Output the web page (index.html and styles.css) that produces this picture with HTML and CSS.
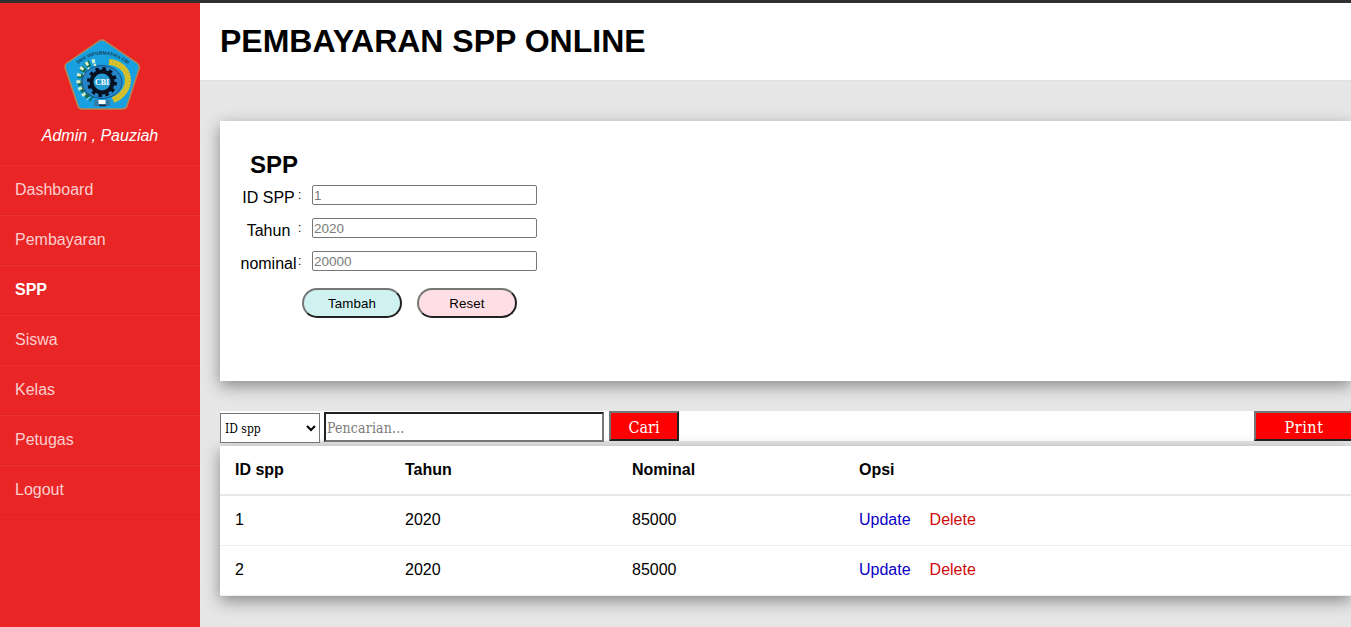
FILE: index.html
```html
<!DOCTYPE html>
<html lang="id">
<head>
<meta charset="utf-8">
<title>Pembayaran SPP Online</title>
<link rel="stylesheet" href="styles.css">
</head>
<body>
<div class="layout">
  <aside class="sidebar">
    <div class="profile">
      <svg class="logo" viewBox="0 0 76 72">
        <defs><path id="arc" d="M11 28Q38 3 67 28"/></defs>
        <path d="M35 2Q38 0 41 2L73 24Q76 26 75 30L63 67Q62 70 58 70H18Q15 70 14 67L1.500 30Q0 26 3 24Z" fill="#18a0e0" stroke="#b98550" stroke-width="1.500"/>
        <text class="logo-ring"><textPath href="#arc" startOffset="50%">SMK INFORMATIKA CBI</textPath></text>
        <g fill="none">
          <path d="M26 24C14 30 12 49 28 60" stroke="#176b54" stroke-width="6" stroke-dasharray="5 2"/>
          <path d="M31 22C13 24 8 47 24 60" stroke="#d5edc8" stroke-width="4" stroke-dasharray="3 4"/>
          <path d="M32 26C19 30 16 43 23 54" stroke="#e5f3ce" stroke-width="3" stroke-dasharray="2 5"/>
          <path d="M45 23C69 25 70 53 49 61" stroke="#dcc52d" stroke-width="6"/>
          <path d="M45 23C69 25 70 53 49 61" stroke="#b9ad2c" stroke-width="5" stroke-dasharray=".7 2"/>
        </g>
        <ellipse cx="38" cy="43" rx="20" ry="16.500" fill="#2485c8" stroke="#174f83"/>
        <circle cx="38" cy="43" r="13" fill="none" stroke="#07101e" stroke-width="4" stroke-dasharray="3.400 3.400"/>
        <circle cx="38" cy="43" r="10.500" fill="#2398d2" stroke="#07101e" stroke-width="4"/>
        <text class="logo-name" x="38" y="46" text-anchor="middle">CBI</text>
        <path d="M30 61h16v6H30z" fill="#3679a7"/><path d="M34.500 61h7v4h-7z" fill="#fff"/><path d="M35 66.500h7" stroke="#172630" stroke-width="1.500"/>
      </svg>
      <em class="user">Admin , Pauziah</em>
    </div>
    <nav class="menu">
      <a>Dashboard</a><a>Pembayaran</a><a class="active">SPP</a><a>Siswa</a><a>Kelas</a><a>Petugas</a><a>Logout</a>
    </nav>
  </aside>
  <main class="main">
    <header class="header"><h1>PEMBAYARAN SPP ONLINE</h1></header>
    <div class="content">
      <section class="card">
        <h2>SPP</h2>
        <form class="form">
          <label class="field"><span class="label">ID SPP</span><span class="colon">:</span><input placeholder="1"></label>
          <label class="field"><span class="label">Tahun</span><span class="colon">:</span><input placeholder="2020"></label>
          <label class="field"><span class="label">nominal</span><span class="colon">:</span><input placeholder="20000"></label>
          <div class="actions"><button type="button" class="pill add">Tambah</button><button type="button" class="pill reset">Reset</button></div>
        </form>
      </section>
      <div class="toolbar">
        <select class="filter"><option>ID spp</option></select>
        <input class="search" placeholder="Pencarian...">
        <button class="red-button find">Cari</button>
        <button class="red-button print">Print</button>
      </div>
      <div class="table">
        <div class="row head"><span>ID spp</span><span>Tahun</span><span>Nominal</span><span>Opsi</span></div>
        <div class="row"><span>1</span><span>2020</span><span>85000</span><span class="options"><a class="update">Update</a><a class="delete">Delete</a></span></div>
        <div class="row"><span>2</span><span>2020</span><span>85000</span><span class="options"><a class="update">Update</a><a class="delete">Delete</a></span></div>
      </div>
    </div>
  </main>
</div>
</body>
</html>
```
FILE: styles.css
```css
* { box-sizing: border-box; }
body { margin: 0; overflow: hidden; font: 16px "Liberation Sans", Arial, sans-serif; color: #000; }
.layout { display: flex; height: 627px; border-top: 3px solid #303030; }
.sidebar { flex: 0 0 200px; background: #ea2525; }
.profile { height: 162px; padding-top: 36px; display: flex; flex-direction: column; align-items: center; border-bottom: 1px solid #e52222; }
.logo { width: 76px; height: 72px; margin-left: 3px; }
.logo-ring { font: bold 4.8px "Liberation Sans", sans-serif; fill: #173d5b; text-anchor: middle; }
.logo-name { font: bold 8px "Liberation Serif", serif; fill: #fff; }
.user { margin-top: 16px; line-height: 18px; color: #fff; }
.menu a { display: block; height: 50px; padding-left: 15px; line-height: 48px; color: #fbcfcf; border-top: 1px solid #ed3431; border-bottom: 1px solid #e22323; }
.menu .active { color: #fff; font-weight: bold; }
.main { flex: 1; min-width: 0; background: #e6e6e6; }
.header { height: 78px; padding-left: 20px; background: #fff; border-bottom: 1px solid #e1e1e1; }
h1 { margin: 0; font-size: 32px; line-height: 76px; }
.content { padding: 40px 0 0 20px; }
.card { height: 260px; padding-top: 30px; background: #fff; box-shadow: 0 5px 15px rgba(0,0,0,.4); }
h2 { margin: 0 0 0 30px; font-size: 24px; line-height: 28px; }
.form { display: flex; flex-direction: column; padding: 6px 0 0 20px; }
.field { display: flex; height: 33px; }
.label { flex: none; width: 57px; padding-top: 4px; line-height: 18px; text-align: center; white-space: nowrap; }
.colon { width: 15px; padding-left: 1px; font-size: 12px; line-height: 21px; }
.field input { width: 225px; height: 20px; padding: 0 1px; border: 1px solid #767676; border-radius: 2px; font: 13.5px "Liberation Sans", sans-serif; }
input::placeholder { color: #7b7b7b; }
.actions { display: flex; gap: 15px; padding: 4px 0 0 62px; }
.pill { width: 100px; height: 30px; padding: 0; border: 2px solid; border-color: #767676 #212121 #212121 #767676; border-radius: 15px; font: 13.333px "Liberation Sans", sans-serif; letter-spacing: .1px; color: #000; }
.add { background: #cff2f0; }
.reset { background: #ffdee5; }
.toolbar { display: flex; height: 30px; margin-top: 30px; background: #fff; }
.filter { width: 100px; height: 30px; margin: 2px 4px 0 0; padding: 1px 0 0; border: 1px solid #767676; border-radius: 0; background: #fff; color: #000; font: 12px "DejaVu Serif Condensed", "DejaVu Serif", serif; }
.search { width: 280px; height: 30px; margin: 1px 5px 0 0; padding: 2px 1px 0; border: 2px solid; border-color: #212121 #767676 #767676 #212121; background: #fff; font: 14px "DejaVu Serif Condensed", "DejaVu Serif", serif; letter-spacing: .15px; }
.red-button { height: 30px; padding: 2px 0 0; border: 2px solid; border-color: #767676 #212121 #212121 #767676; background: #f00; color: #fff; font: 16px "DejaVu Serif Condensed", "DejaVu Serif", serif; }
.find { width: 70px; }
.print { width: 100px; margin: 0 -3px 0 auto; letter-spacing: .6px; }
.table { margin-top: 5px; background: #fff; box-shadow: 0 5px 15px rgba(0,0,0,.4); }
.row { display: grid; grid-template-columns: 170px 227px 227px 1fr; height: 50px; padding-left: 15px; line-height: 47px; border-bottom: 1px solid #eee; }
.row.head { font-weight: bold; border-bottom: 2px solid #e8e8e8; }
.options { display: flex; gap: 19px; }
.update { color: #0b00c8; }
.delete { color: #cf0a0a; }
```
